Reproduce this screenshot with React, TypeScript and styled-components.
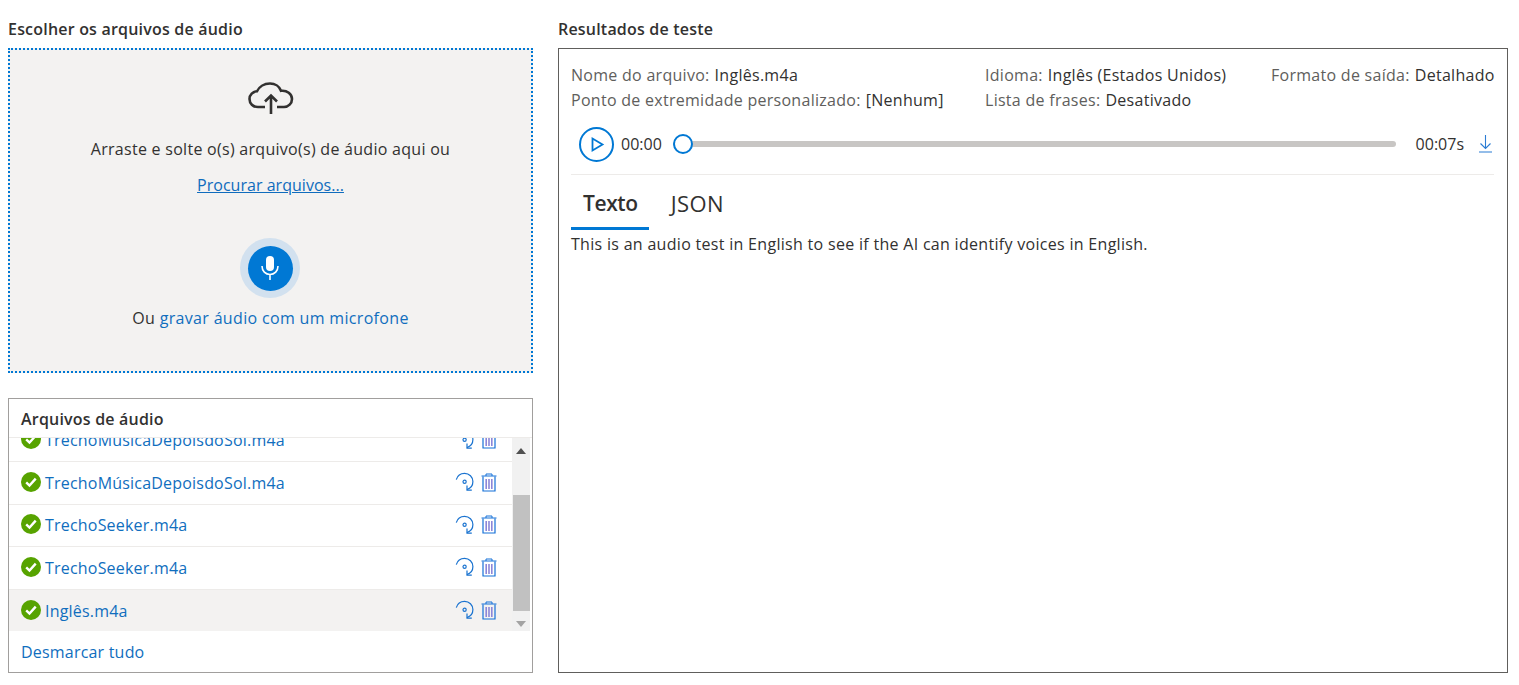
import React from "react";
import styled, { createGlobalStyle } from "styled-components";

const Global = createGlobalStyle`
  html, body { margin: 0; padding: 0; background: #fff; overflow: hidden; }
  body { font-family: "Open Sans", "Noto Sans", "Liberation Sans", sans-serif; color: #323130; }
`;

const Page = styled.div`
  display: grid;
  grid-template-columns: 525px 950px;
  column-gap: 25px;
  padding: 19px 0 0 8px;
  width: 1519px;
  height: 685px;
  box-sizing: border-box;
`;
const Column = styled.div`
  display: flex;
  flex-direction: column;
  height: 654px;
`;
const SectionTitle = styled.h2`
  margin: 0 0 9px;
  font-size: 16px;
  line-height: 20px;
  font-weight: 600;
  letter-spacing: 0.2px;
  color: #323130;
`;
const DropZone = styled.div`
  box-sizing: border-box;
  height: 325px;
  border: 2px dotted #0078d4;
  background: #f3f2f1;
  display: flex;
  flex-direction: column;
  align-items: center;
  padding-top: 29px;
`;
const DropText = styled.div`
  margin-top: 23px;
  font-size: 16px;
  line-height: 22px;
  letter-spacing: 0.28px;
`;
const BrowseLink = styled.a`
  margin-top: 14px;
  font-size: 16px;
  line-height: 22px;
  letter-spacing: 0.03px;
  color: #0f6cbd;
  text-decoration: underline;
`;
const MicHalo = styled.div`
  margin: 42px 1px 0 0;
  width: 60px;
  height: 60px;
  border-radius: 50%;
  background: #d2e1ef;
  display: flex;
  align-items: center;
  justify-content: center;
`;
const MicDisc = styled.div`
  width: 45px;
  height: 45px;
  border-radius: 50%;
  background: #0078d4;
  display: flex;
  align-items: center;
  justify-content: center;
`;
const RecordText = styled.div`
  margin-top: 9px;
  font-size: 16px;
  line-height: 22px;
  letter-spacing: 0.33px;
`;
const Accent = styled.span`
  color: #106ebe;
`;
const FilesBox = styled.div`
  box-sizing: border-box;
  margin-top: 25px;
  height: 275px;
  border: 1px solid #a19f9d;
  display: flex;
  flex-direction: column;
`;
const FilesHeader = styled.div`
  box-sizing: border-box;
  height: 39px;
  flex: none;
  padding: 9px 0 0 12px;
  font-size: 16px;
  line-height: 22px;
  font-weight: 600;
  letter-spacing: 0.2px;
  border-bottom: 1px solid #edebe9;
`;
const FilesBody = styled.div`
  display: flex;
  height: 193px;
  flex: none;
  position: relative;
`;
const RowsViewport = styled.div`
  flex: 1;
  overflow: hidden;
`;
const Rows = styled.div`
  margin-top: -18.5px;
`;
const Row = styled.div<{ $selected?: boolean }>`
  box-sizing: border-box;
  height: 42.5px;
  display: flex;
  align-items: center;
  padding-left: 12px;
  border-bottom: 1.5px solid #edebe9;
  background: ${(p) => (p.$selected ? "#f3f2f1" : "#fff")};
  &:last-child { border-bottom: 0; }
`;
const CheckMark = styled.svg`
  flex: none;
  margin-top: -2px;
`;
const FileName = styled.a`
  margin-left: 4px;
  flex: 1;
  font-size: 16px;
  line-height: 22px;
  letter-spacing: 0.2px;
  color: #106ebe;
`;
const RowActions = styled.div`
  display: flex;
  align-items: center;
  gap: 6px;
  margin-right: 15px;
  margin-top: -1px;
`;
const ScrollTrack = styled.div`
  width: 18px;
  margin-right: 2px;
  flex: none;
  background: #f1f1f1;
  display: flex;
  flex-direction: column;
  align-items: center;
`;
const ScrollButton = styled.div`
  height: 25px;
  flex: none;
  display: flex;
  align-items: center;
  justify-content: center;
`;
const ScrollSpacer = styled.div`
  height: 32px;
  flex: none;
`;
const ScrollThumb = styled.div`
  width: 17px;
  height: 116px;
  flex: none;
  background: #c1c1c1;
`;
const FilesFooter = styled.a`
  padding: 10px 0 0 12px;
  font-size: 16px;
  line-height: 22px;
  letter-spacing: 0.2px;
  color: #106ebe;
`;
const ResultBox = styled.div`
  box-sizing: border-box;
  height: 625px;
  border: 1px solid #605e5c;
  padding: 14px 13px 0 12px;
  display: flex;
  flex-direction: column;
`;
const MetaGrid = styled.div`
  display: grid;
  grid-template-columns: 414px 286px 1fr;
  grid-auto-rows: 25px;
  font-size: 16px;
  line-height: 25px;
  letter-spacing: 0.28px;
  white-space: nowrap;
`;
const MetaCell = styled.div<{ $right?: boolean }>`
  text-align: ${(p) => (p.$right ? "right" : "left")};
`;
const MetaLabel = styled.span`
  color: #605e5c;
  margin-right: 5px;
`;
const Player = styled.div`
  margin-top: 11px;
  height: 40px;
  display: flex;
  align-items: center;
  padding: 0 2px 0 8px;
`;
const Time = styled.span`
  font-size: 16px;
  color: #323130;
`;
const PlayButton = styled.div`
  margin-right: 7px;
  display: flex;
`;
const Track = styled.div`
  flex: 1;
  position: relative;
  height: 6px;
  margin: 0 20px 0 11px;
  border-radius: 3px;
  background: #c8c6c4;
`;
const Thumb = styled.div`
  position: absolute;
  left: 0;
  top: -7px;
  box-sizing: border-box;
  width: 20px;
  height: 20px;
  border-radius: 50%;
  border: 2px solid #0078d4;
  background: #fff;
`;
const DownloadIcon = styled.div`
  margin-left: 15px;
  display: flex;
`;
const Divider = styled.div`
  margin-top: 10px;
  height: 1px;
  background: #edebe9;
`;
const Tabs = styled.div`
  display: flex;
  gap: 10px;
  height: 55px;
  flex: none;
`;
const Tab = styled.div<{ $active?: boolean }>`
  box-sizing: border-box;
  height: 55px;
  padding: 13px ${(p) => (p.$active ? 11 : 12)}px 0 12px;
  font-size: ${(p) => (p.$active ? 21 : 22)}px;
  line-height: 30px;
  letter-spacing: ${(p) => (p.$active ? -0.4 : 0.4)}px;
  font-weight: ${(p) => (p.$active ? 600 : 400)};
  border-bottom: 3px solid ${(p) => (p.$active ? "#0078d4" : "transparent")};
`;
const Transcript = styled.div`
  margin-top: 2px;
  font-size: 16px;
  line-height: 25px;
  letter-spacing: 0.3px;
`;

const Check = () => (
  <CheckMark width="20" height="20" viewBox="0 0 20 20">
    <circle cx="10" cy="10" r="10" fill="#57a300" />
    <path d="M5.2 10.4l3.3 3.2 6.2-7" fill="none" stroke="#fff" strokeWidth="2.4" />
  </CheckMark>
);
const Reprocess = () => (
  <svg width="20" height="20" viewBox="0 0 20 20" fill="none" stroke="#1a73d0" strokeWidth="1.2">
    <path d="M1.3 7.6C2.4 3.8 5.6 1.4 9.6 1.400c4.600 0 8.300 3.600 8.300 8.200 0 3.800-2.500 7-6 8" />
    <path d="M12 13.600v4.500h4.800" />
    <circle cx="9.600" cy="9.800" r="1.600" />
  </svg>
);
const Trash = () => (
  <svg width="16" height="19" viewBox="0 0 16 19" fill="none">
    <path d="M0.500 3h15M5 3V1h6v2" stroke="#1570d8" />
    <path d="M2 3.500v14.500h12V3.500" stroke="#1570d8" strokeWidth="1.200" />
    <path d="M5.200 6v10M8 6v10M10.800 6v10" stroke="#8c86d8" strokeWidth="1.600" />
  </svg>
);

const files = [
  "TrechoMúsicaDepoisdoSol.m4a",
  "TrechoMúsicaDepoisdoSol.m4a",
  "TrechoSeeker.m4a",
  "TrechoSeeker.m4a",
  "Inglês.m4a",
];

export default function App() {
  return (
    <>
      <Global />
      <Page>
        <Column>
          <SectionTitle>Escolher os arquivos de áudio</SectionTitle>
          <DropZone>
            <svg width="46" height="36" viewBox="0 0 46 36" fill="none" stroke="#323130" strokeWidth="2.6">
              <path d="M17 28H10C5 28 1.500 24.500 1.500 20c0-4.200 3.400-7.500 7.500-7.700C11 8 16 4.500 22 4.500c5 0 9.500 3 11 7.300C39 11 44 15 44 20c0 4.400-3.600 8-8 8h-7" />
              <path d="M23 35V16.500M17 22.500l6-6 6 6" />
            </svg>
            <DropText>Arraste e solte o(s) arquivo(s) de áudio aqui ou</DropText>
            <BrowseLink>Procurar arquivos...</BrowseLink>
            <MicHalo>
              <MicDisc>
                <svg width="18" height="26" viewBox="0 0 18 26" fill="none">
                  <rect x="5" y="1" width="8" height="15" rx="4" fill="#fff" />
                  <path d="M1 11c0 5 3.500 8.500 8 8.500s8-3.500 8-8.500M9 19.500V25" stroke="#fff" strokeWidth="1.600" />
                </svg>
              </MicDisc>
            </MicHalo>
            <RecordText>
              Ou <Accent>gravar áudio com um microfone</Accent>
            </RecordText>
          </DropZone>
          <FilesBox>
            <FilesHeader>Arquivos de áudio</FilesHeader>
            <FilesBody>
              <RowsViewport>
                <Rows>
                  {files.map((f, i) => (
                    <Row key={i} $selected={i === files.length - 1}>
                      <Check />
                      <FileName>{f}</FileName>
                      <RowActions>
                        <Reprocess />
                        <Trash />
                      </RowActions>
                    </Row>
                  ))}
                </Rows>
              </RowsViewport>
              <ScrollTrack>
                <ScrollButton>
                  <svg width="10" height="6" viewBox="0 0 10 6"><path d="M5 0l5 6H0z" fill="#505050" /></svg>
                </ScrollButton>
                <ScrollSpacer />
                <ScrollThumb />
                <ScrollButton>
                  <svg width="10" height="6" viewBox="0 0 10 6"><path d="M0 0h10L5 6z" fill="#a3a3a3" /></svg>
                </ScrollButton>
              </ScrollTrack>
            </FilesBody>
            <FilesFooter>Desmarcar tudo</FilesFooter>
          </FilesBox>
        </Column>
        <Column>
          <SectionTitle>Resultados de teste</SectionTitle>
          <ResultBox>
            <MetaGrid>
              <MetaCell><MetaLabel>Nome do arquivo:</MetaLabel>Inglês.m4a</MetaCell>
              <MetaCell><MetaLabel>Idioma:</MetaLabel>Inglês (Estados Unidos)</MetaCell>
              <MetaCell $right><MetaLabel>Formato de saída:</MetaLabel>Detalhado</MetaCell>
              <MetaCell><MetaLabel>Ponto de extremidade personalizado:</MetaLabel>[Nenhum]</MetaCell>
              <MetaCell><MetaLabel>Lista de frases:</MetaLabel>Desativado</MetaCell>
            </MetaGrid>
            <Player>
              <PlayButton>
                <svg width="35" height="35" viewBox="0 0 35 35" fill="none" stroke="#0078d4">
                  <circle cx="17.500" cy="17.500" r="16.500" strokeWidth="2" />
                  <path d="M13.500 11.500v12l10-6z" strokeWidth="1.800" />
                </svg>
              </PlayButton>
              <Time>00:00</Time>
              <Track><Thumb /></Track>
              <Time>00:07s</Time>
              <DownloadIcon>
                <svg width="13" height="18" viewBox="0 0 13 18" fill="none" stroke="#2b7cd3" strokeWidth="1.100">
                  <path d="M6.500 0v13M1.500 8.500l5 5 5-5M0 17h13" />
                </svg>
              </DownloadIcon>
            </Player>
            <Divider />
            <Tabs>
              <Tab $active>Texto</Tab>
              <Tab>JSON</Tab>
            </Tabs>
            <Transcript>This is an audio test in English to see if the AI can identify voices in English.</Transcript>
          </ResultBox>
        </Column>
      </Page>
    </>
  );
}
